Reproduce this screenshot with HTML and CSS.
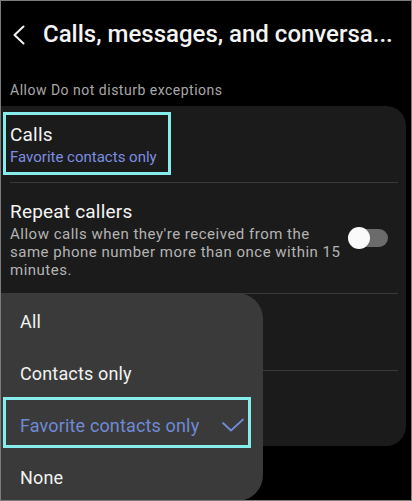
FILE: index.html
```html
<!DOCTYPE html>
<html>
<head>
<meta charset="utf-8">
<link rel="stylesheet" href="styles.css">
</head>
<body>
<div class="screen">
  <header class="topbar">
    <svg class="back" width="14" height="20" viewBox="0 0 14 20"><polyline points="11.5,1.5 2.5,10 11.5,18.5" fill="none" stroke="#f2f2f2" stroke-width="2" stroke-linecap="round" stroke-linejoin="round"/></svg>
    <h1 class="title">Calls, messages, and conversa...</h1>
  </header>
  <div class="section-label">Allow Do not disturb exceptions</div>
  <div class="card">
    <div class="row row-calls">
      <div class="row-title">Calls</div>
      <div class="row-value">Favorite contacts only</div>
      <div class="mark mark-calls"></div>
    </div>
    <div class="divider"></div>
    <div class="row row-repeat">
      <div class="row-text">
        <div class="row-title">Repeat callers</div>
        <div class="row-desc">Allow calls when they're received from the same phone number more than once within 15 minutes.</div>
      </div>
      <div class="toggle"><span class="knob"></span></div>
    </div>
    <div class="divider"></div>
    <div class="row row-empty"></div>
    <div class="divider"></div>
    <div class="row row-empty2"></div>
  </div>
  <div class="menu">
    <div class="menu-item">All</div>
    <div class="menu-item">Contacts only</div>
    <div class="menu-item selected">
      <span>Favorite contacts only</span>
      <svg class="check" width="24" height="16" viewBox="0 0 24 16"><polyline points="2,5 10,12.5 22,1.5" fill="none" stroke="#6f8ad6" stroke-width="1.8" stroke-linecap="round" stroke-linejoin="round"/></svg>
      <div class="mark mark-menu"></div>
    </div>
    <div class="menu-item">None</div>
  </div>
</div>
</body>
</html>
```

FILE: styles.css
```css
html, body {
  margin: 0;
  padding: 0;
  background: #000;
}
.screen {
  position: relative;
  width: 412px;
  height: 501px;
  box-sizing: border-box;
  border: 1px solid #7c7c7c;
  background: #000;
  overflow: hidden;
  font-family: Roboto, "Noto Sans", sans-serif;
  color: #f2f2f2;
}
.topbar {
  display: flex;
  align-items: center;
  padding: 17px 0 0 11px;
  height: 32px;
}
.back {
  flex: none;
  margin-top: 1px;
}
.title {
  margin: 0 0 0 17px;
  font-size: 24px;
  line-height: 32px;
  font-weight: 500;
  color: #f4f4f4;
  white-space: nowrap;
}
.section-label {
  margin-top: 30px;
  padding-left: 9px;
  font-size: 14px;
  line-height: 20px;
  letter-spacing: 0.5px;
  color: #a8a8a8;
}
.card {
  margin-top: 6px;
  margin-right: 5px;
  background: #1b1b1b;
  border-radius: 0 20px 20px 0;
  overflow: hidden;
}
.row {
  position: relative;
  padding: 0 9px;
}
.row-calls {
  padding-top: 16px;
  padding-bottom: 15px;
}
.row-title {
  font-size: 19px;
  line-height: 25px;
  letter-spacing: 0.2px;
  color: #f4f4f4;
}
.row-value {
  font-size: 15px;
  line-height: 20px;
  color: #7b8fe2;
}
.divider {
  height: 1px;
  background: #3a3a3a;
  margin: 0 8px 0 9px;
}
.row-repeat {
  display: flex;
  align-items: center;
  justify-content: space-between;
  padding-top: 16px;
  padding-bottom: 14px;
}
.row-text {
  width: 334px;
}
.row-desc {
  margin-top: 1px;
  font-size: 15px;
  line-height: 18px;
  letter-spacing: 0.5px;
  color: #b4b4b4;
}
.toggle {
  position: relative;
  flex: none;
  width: 39px;
  height: 18px;
  margin-right: 9px;
  margin-top: -2px;
  border-radius: 9px;
  background: #6b6b6b;
}
.knob {
  position: absolute;
  left: -1px;
  top: -2px;
  width: 22px;
  height: 22px;
  border-radius: 50%;
  background: #fafafa;
}
.row-empty {
  height: 76px;
}
.row-empty2 {
  height: 75px;
}
.mark {
  position: absolute;
  box-sizing: border-box;
  border: 3px solid #86ecec;
}
.mark-calls {
  left: 2px;
  top: 6px;
  width: 168px;
  height: 63px;
}
.menu {
  position: absolute;
  left: 0;
  top: 292px;
  width: 262px;
  height: 208px;
  padding-top: 2px;
  box-sizing: border-box;
  background: #3a3a3a;
  border-radius: 0 26px 26px 0;
}
.menu-item {
  position: relative;
  display: flex;
  align-items: center;
  justify-content: space-between;
  height: 52px;
  padding: 0 18px 0 19px;
  font-size: 18px;
  letter-spacing: 0.15px;
  color: #f2f2f2;
}
.menu-item.selected {
  color: #6f8ad6;
}
.check {
  flex: none;
  margin-top: 2px;
}
.mark-menu {
  left: 2px;
  top: -2px;
  width: 248px;
  height: 51px;
}
```
